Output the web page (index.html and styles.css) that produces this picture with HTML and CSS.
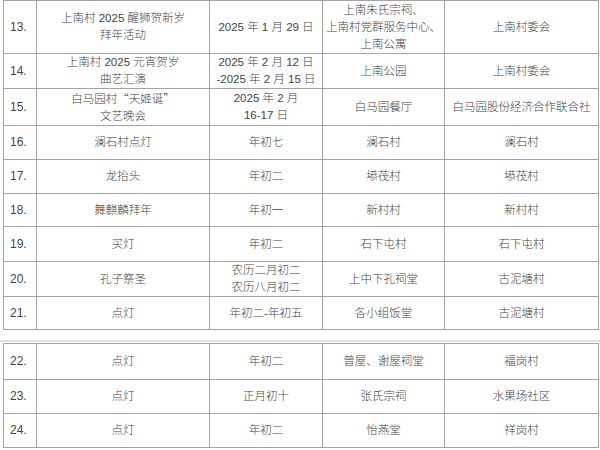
FILE: index.html
```html
<!DOCTYPE html>
<html lang="zh">
<head>
<meta charset="utf-8">
<link rel="stylesheet" href="styles.css">
</head>
<body>
<div class="page">
  <table class="grid">
    <colgroup>
      <col class="c-no"><col class="c-name"><col class="c-date"><col class="c-place"><col class="c-org">
    </colgroup>
    <tr class="r53">
      <td class="no">13.</td>
      <td>上南村 2025 醒狮贺新岁<br>拜年活动</td>
      <td>2025 年 1 月 29 日</td>
      <td>上南朱氏宗祠、<br>上南村党群服务中心、<br>上南公寓</td>
      <td>上南村委会</td>
    </tr>
    <tr class="r35">
      <td class="no">14.</td>
      <td>上南村 2025 元宵贺岁<br>曲艺汇演</td>
      <td>2025 年 2 月 12 日<br>-2025 年 2 月 15 日</td>
      <td>上南公园</td>
      <td>上南村委会</td>
    </tr>
    <tr class="r37">
      <td class="no">15.</td>
      <td><span class="cjk">白马园村“天姬诞”</span><br>文艺晚会</td>
      <td>2025 年 2 月<br>16-17 日</td>
      <td>白马园餐厅</td>
      <td>白马园股份经济合作联合社</td>
    </tr>
    <tr class="r34">
      <td class="no">16.</td>
      <td>澜石村点灯</td>
      <td>年初七</td>
      <td>澜石村</td>
      <td>澜石村</td>
    </tr>
    <tr class="r34">
      <td class="no">17.</td>
      <td>龙抬头</td>
      <td>年初二</td>
      <td>塨茷村</td>
      <td>塨茷村</td>
    </tr>
    <tr class="r33">
      <td class="no">18.</td>
      <td>舞麒麟拜年</td>
      <td>年初一</td>
      <td>新村村</td>
      <td>新村村</td>
    </tr>
    <tr class="r35">
      <td class="no">19.</td>
      <td>买灯</td>
      <td>年初二</td>
      <td>石下屯村</td>
      <td>石下屯村</td>
    </tr>
    <tr class="r35">
      <td class="no">20.</td>
      <td>孔子祭圣</td>
      <td>农历二月初二<br>农历八月初二</td>
      <td>上中下孔祠堂</td>
      <td>古泥塘村</td>
    </tr>
    <tr class="r33">
      <td class="no">21.</td>
      <td>点灯</td>
      <td>年初二-年初五</td>
      <td>各小组饭堂</td>
      <td>古泥塘村</td>
    </tr>
  </table>
  <div class="break"></div>
  <table class="grid">
    <colgroup>
      <col class="c-no"><col class="c-name"><col class="c-date"><col class="c-place"><col class="c-org">
    </colgroup>
    <tr class="r36">
      <td class="no">22.</td>
      <td>点灯</td>
      <td>年初二</td>
      <td>曾屋、谢屋祠堂</td>
      <td>福岗村</td>
    </tr>
    <tr class="r34">
      <td class="no">23.</td>
      <td>点灯</td>
      <td>正月初十</td>
      <td>张氏宗祠</td>
      <td>水果场社区</td>
    </tr>
    <tr class="r34">
      <td class="no">24.</td>
      <td>点灯</td>
      <td>年初二</td>
      <td>怡燕堂</td>
      <td>祥岗村</td>
    </tr>
  </table>
</div>
</body>
</html>
```
FILE: styles.css
```css
html, body {
  margin: 0;
  padding: 0;
  background: #ffffff;
}
.page {
  width: 600px;
  height: 450px;
  overflow: hidden;
  padding: 0 3px;
  box-sizing: border-box;
  font-family: "Liberation Sans", "Noto Sans CJK SC", sans-serif;
  font-size: 11.5px;
  font-weight: 300;
  color: #444444;
}
.grid {
  width: 595px;
  border-collapse: collapse;
  table-layout: fixed;
}
.c-no { width: 33px; }
.c-name { width: 173px; }
.c-date { width: 113px; }
.c-place { width: 122px; }
.c-org { width: 154px; }
.grid td {
  border: 1px solid #a3a3a3;
  text-align: center;
  vertical-align: middle;
  line-height: 17px;
  padding: 0 2px;
  white-space: nowrap;
  overflow: hidden;
}
.grid td.no {
  text-align: left;
  padding-left: 6px;
  font-size: 12px;
  font-weight: 400;
}
.cjk {
  font-family: "Noto Sans CJK SC", sans-serif;
}
.r53 td { height: 52px; }
.r37 td { height: 36px; }
.r36 td { height: 35px; }
.r35 td { height: 34px; }
.r34 td { height: 33px; }
.r33 td { height: 32px; }
.break {
  height: 2px;
  margin: 10px -3px 1px;
  background: #e2e2e2;
}
```
